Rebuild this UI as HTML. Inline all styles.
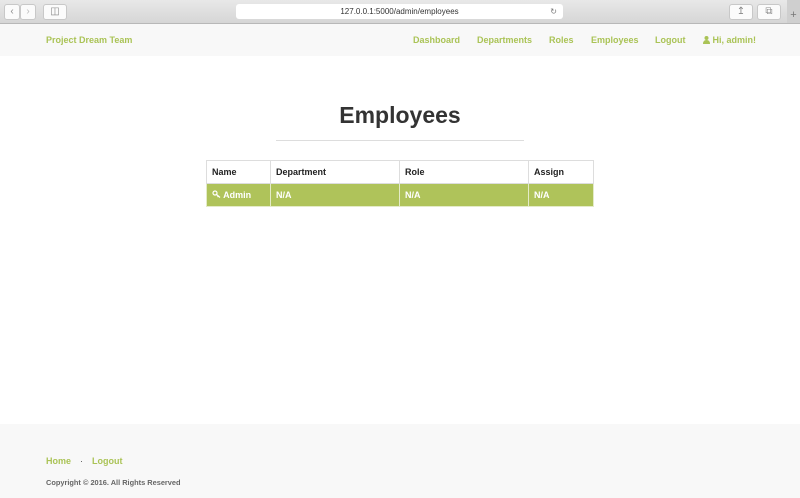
<!DOCTYPE html>
<html><head><style>
body{margin:0;width:800px;height:498px;overflow:hidden;font-family:"Liberation Sans",sans-serif;background:#fff;position:relative}
.chrome{position:absolute;top:0;left:0;width:800px;height:23px;background:linear-gradient(#e8e8e8,#d6d6d6);border-bottom:1px solid #b8b8b8}
.btn{position:absolute;top:4px;height:14px;background:#fbfbfb;border:1px solid #c8c8c8;border-radius:3px;color:#888;font-size:10px;line-height:14px;text-align:center}
.url{position:absolute;left:236px;top:4px;width:327px;height:15px;background:#fff;border-radius:3px;font-size:8px;line-height:15px;text-align:center;color:#333}
.nav{position:absolute;top:24px;left:0;width:800px;height:32px;background:#f8f8f8}
.nav a{position:absolute;top:11px;font-size:9px;font-weight:bold;color:#aac356;text-decoration:none}
h1{position:absolute;top:102px;left:0;width:800px;margin:0;text-align:center;font-size:23px;color:#333;font-weight:bold}
.hr{position:absolute;left:276px;top:140px;width:248px;height:1px;background:#ddd}
table{position:absolute;left:206px;top:160px;border-collapse:collapse;font-size:9px;font-weight:bold}
td{border:1px solid #ddd;height:22px;padding:0 5px;color:#222}
tr.g td{background:#afc35a;color:#fff;border-color:#e4ebc8}
.foot{position:absolute;top:424px;left:0;width:800px;height:74px;background:#f8f8f8}
.foot a{position:absolute;top:32px;font-size:9px;font-weight:bold;color:#aac356}
.copy{position:absolute;left:46px;top:54px;font-size:7.4px;font-weight:bold;color:#666}
</style></head><body>
<div class="chrome">
<div class="btn" style="left:4px;width:14px">&#8249;</div>
<div class="btn" style="left:20px;width:14px;color:#bbb">&#8250;</div>
<div class="btn" style="left:43px;width:22px">&#9707;</div>
<div class="url">127.0.0.1:5000/admin/employees<span style="position:absolute;right:6px;color:#777">&#8635;</span></div>
<div class="btn" style="left:729px;width:22px">&#8613;</div>
<div class="btn" style="left:757px;width:22px">&#10697;</div>
<div style="position:absolute;left:787px;top:0;width:13px;height:23px;background:#cfcfcf;color:#777;font-size:11px;line-height:30px;text-align:center">+</div>
</div>
<div class="nav">
<a style="left:46px">Project Dream Team</a>
<a style="left:413px">Dashboard</a>
<a style="left:477px">Departments</a>
<a style="left:549px">Roles</a>
<a style="left:591px">Employees</a>
<a style="left:655px">Logout</a>
<a style="left:703px"><svg width="7" height="8" viewBox="0 0 7 8" style="vertical-align:-1px"><circle cx="3.5" cy="2" r="2" fill="#aac356"/><path d="M0 8 Q0 4 3.5 4 Q7 4 7 8Z" fill="#aac356"/></svg> Hi, admin!</a>
</div>
<h1>Employees</h1>
<div class="hr"></div>
<table>
<tr><td style="width:53px">Name</td><td style="width:118px">Department</td><td style="width:118px">Role</td><td style="width:54px">Assign</td></tr>
<tr class="g"><td><svg width="9" height="8" viewBox="0 0 9 8" style="vertical-align:0"><circle cx="3" cy="3" r="2" fill="none" stroke="#fff" stroke-width="1.2"/><path d="M4.5 4.5L8 7.5M6.5 6l-1 1" stroke="#fff" stroke-width="1.2"/></svg> Admin</td><td>N/A</td><td>N/A</td><td>N/A</td></tr>
</table>
<div class="foot">
<a style="left:46px">Home</a>
<span style="position:absolute;left:80px;top:32px;font-size:9px;color:#555">·</span>
<a style="left:92px">Logout</a>
<div class="copy">Copyright © 2016. All Rights Reserved</div>
</div>
</body></html>
